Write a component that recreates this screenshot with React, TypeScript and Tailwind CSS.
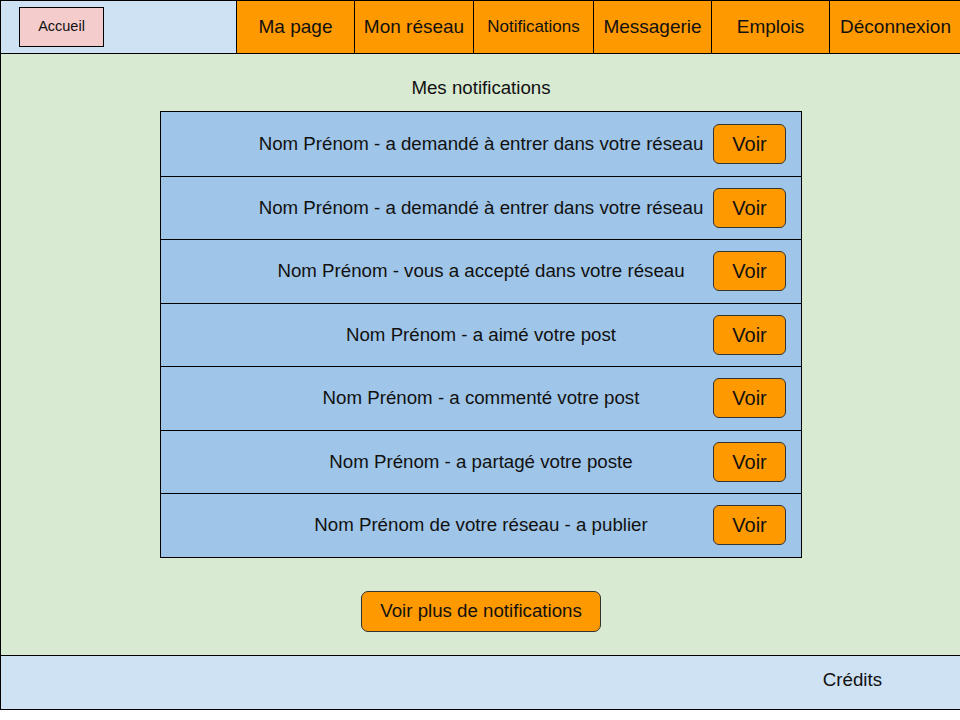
import React from "react";

const navItems = [
  { label: "Ma page", w: "w-[118px]", size: "text-[19px]" },
  { label: "Mon réseau", w: "w-[119px]", size: "text-[19px]" },
  { label: "Notifications", w: "w-[120px]", size: "text-[17px]" },
  { label: "Messagerie", w: "w-[118px]", size: "text-[19px]" },
  { label: "Emplois", w: "w-[118px]", size: "text-[19px]" },
  { label: "Déconnexion", w: "flex-1", size: "text-[19px]" },
];

const notifications = [
  "Nom Prénom - a demandé à entrer dans votre réseau",
  "Nom Prénom - a demandé à entrer dans votre réseau",
  "Nom Prénom - vous a accepté dans votre réseau",
  "Nom Prénom - a aimé votre post",
  "Nom Prénom - a commenté votre post",
  "Nom Prénom - a partagé votre poste",
  "Nom Prénom de votre réseau - a publier",
];

const NotificationRow = ({ text, first }: { text: string; first: boolean }) => (
  <div
    className={`grid grid-cols-[1fr_auto_1fr] items-center h-[63.5px] ${
      first ? "" : "border-t border-black"
    }`}
  >
    <div />
    <p className="text-[18.7px] text-[#111] whitespace-nowrap">{text}</p>
    <div className="flex justify-end pr-[15px]">
      <button className="w-[73px] h-[40px] rounded-[6px] bg-[#ff9900] border border-[#333] text-[20px] text-[#111]">
        Voir
      </button>
    </div>
  </div>
);

export default function App() {
  return (
    <div className="w-[961px] bg-white font-['Liberation_Sans',Arial,sans-serif] text-[#111]">
      <div className="flex h-[54px] border-t border-b border-l border-black">
        <div className="w-[236px] bg-[#cfe2f3] border-r border-black flex items-center pl-[18px]">
          <div className="w-[85px] h-[40px] bg-[#f4cccc] border border-black flex items-center justify-center text-[14.5px]">
            Accueil
          </div>
        </div>
        {navItems.map((item, i) => (
          <div
            key={item.label}
            className={`${item.w} ${item.size} bg-[#ff9900] flex items-center justify-center whitespace-nowrap ${
              i < navItems.length - 1 ? "border-r border-black" : ""
            }`}
          >
            {item.label}
          </div>
        ))}
      </div>

      <div className="h-[602px] bg-[#d9ead3] border-l border-b border-black flex flex-col items-center">
        <p className="mt-[23px] text-[18.7px] leading-[21px]">Mes notifications</p>
        <div className="mt-[13px] w-[642px] bg-[#9fc5e8] border border-black flex flex-col">
          {notifications.map((n, i) => (
            <NotificationRow key={i} text={n} first={i === 0} />
          ))}
        </div>
        <button className="mt-[33px] w-[240px] h-[41px] rounded-[7px] bg-[#ff9900] border border-[#333] text-[18.7px] text-[#111]">
          Voir plus de notifications
        </button>
      </div>

      <div className="h-[54px] bg-[#cfe2f3] border-l border-b border-black flex items-center justify-end pr-[79px]">
        <p className="text-[18.7px] mb-[4px]">Crédits</p>
      </div>
    </div>
  );
}
